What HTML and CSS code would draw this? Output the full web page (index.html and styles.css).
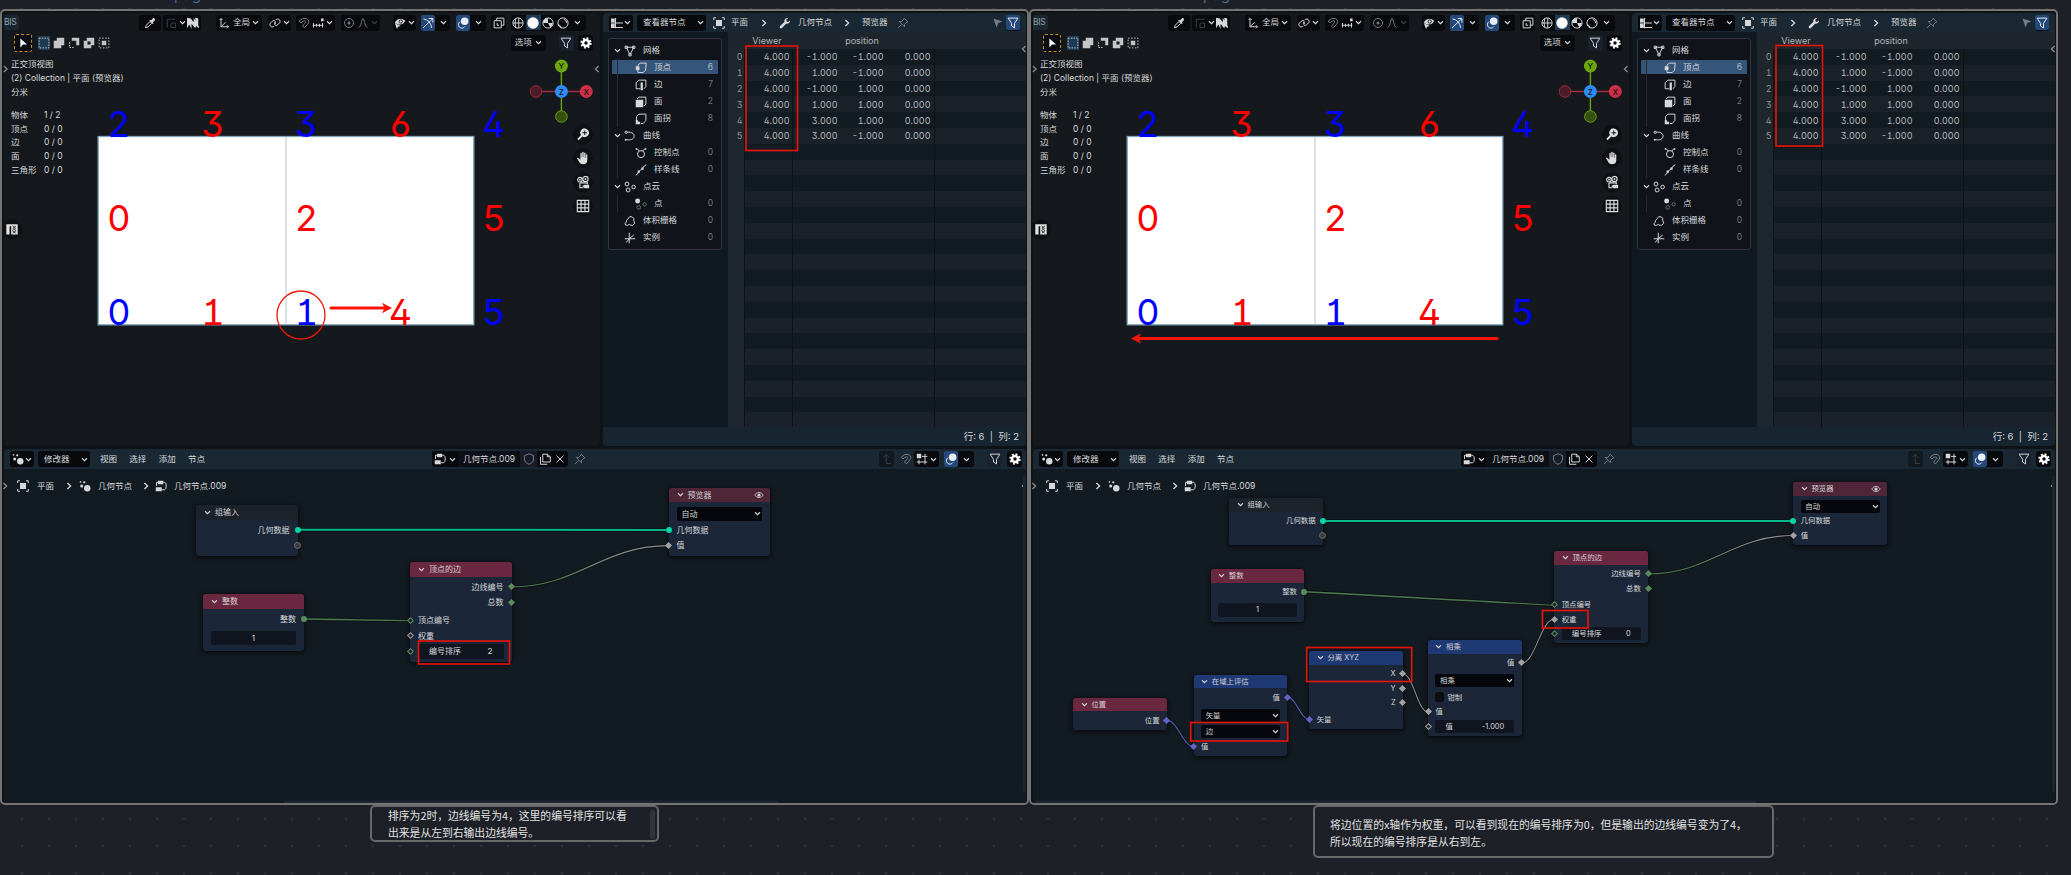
FILE: index.html
```html
<!DOCTYPE html>
<html lang="zh-CN">
<head>
<meta charset="utf-8">
<title>几何节点</title>
<link rel="stylesheet" href="styles.css">
</head>
<body>
<svg class="sprite" aria-hidden="true">
  <symbol id="chev" viewBox="0 0 8 8"><path d="M1.2 2.6 4 5.4 6.8 2.6" class="s"/></symbol>
  <symbol id="right" viewBox="0 0 8 8"><path d="M2.4 1 5.6 4 2.4 7" class="s"/></symbol>
  <symbol id="left" viewBox="0 0 8 8"><path d="M5.6 1 2.4 4l3.2 3" class="s"/></symbol>
  <symbol id="pick" viewBox="0 0 16 16"><path d="M2 14.2 3 11l5-5 2.300 2.300-5 5z" class="s"/><path d="m7 4.600 4.700 4.700 1-1-1-1.200 2.600-2.600c1.400-1.600-1-4-2.600-2.600L9.100 4.500 8 3.600z" class="f"/></symbol>
  <symbol id="corner" viewBox="0 0 16 16"><path d="M3 14V3h11M8 14h6V8H10q-2 0-2 2z" class="s"/></symbol>
  <symbol id="zebra" viewBox="0 0 16 16"><path d="M0 1l5 1 4 5V1l7 12v2l-4-3-1 3-5-6v7L3 10l-3 5z" class="f"/><path d="M11 1v6l2 3 2 2V2z" class="f"/></symbol>
  <symbol id="axes" viewBox="0 0 16 16"><path d="M4 2v11h10M4 13l6-6M2 4l2-2 2 2M12 11l2 2-2 2" class="s"/></symbol>
  <symbol id="link" viewBox="0 0 16 16"><path d="M9 4l1-1a3.300 3.300 0 0 1 4.300 4.700l-2.500 2.500a3.300 3.300 0 0 1-4.600 0M7 12l-1 1a3.300 3.300 0 0 1-4.300-4.700l2.500-2.500a3.300 3.300 0 0 1 4.600 0" class="s"/><circle cx="8" cy="8" r="1.300" class="f"/></symbol>
  <symbol id="magnet" viewBox="0 0 16 16"><path d="M1.500 5.500q5-5.500 10-3.500 5 3.500 1 8L8.500 14.500 6 12l4-4.500q1-2.500-1.500-2.500Q6 5.500 4 8z" class="s"/></symbol>
  <symbol id="incr" viewBox="0 0 16 16"><path d="M1 11h14M2 8v6M6 9v4M10 9v4M14 8v6" class="s"/><path d="M12 2h3.500v3.500H12z" class="f"/></symbol>
  <symbol id="prop" viewBox="0 0 16 16"><circle cx="8" cy="8" r="6" class="s"/><circle cx="8" cy="8" r="2" class="f"/></symbol>
  <symbol id="fall" viewBox="0 0 16 16"><path d="M2 14C6 13 6 2 8 2s2 11 6 12" class="s"/></symbol>
  <symbol id="eyecur" viewBox="0 0 16 16"><path d="M1 7q6-8 14-2-3 6-9 5Q2 9 1 7z" class="f"/><circle cx="9" cy="6" r="2.200" fill="none" stroke="#111" stroke-width="1.200"/><path d="M1 8l8 4-3.500 1L4 16z" class="f"/></symbol>
  <symbol id="gizmo" viewBox="0 0 16 16"><path d="M1.500 14.500 14 2.500M9 2h5.500v5.500" class="s"/><path d="M2 2.500q9 1.500 11 12" class="s"/></symbol>
  <symbol id="overlay" viewBox="0 0 16 16"><circle cx="10.200" cy="5.800" r="5" class="f"/><path d="M4 6.200a4.700 4.700 0 1 0 6.500 6.500" class="s" stroke-width="1.700"/></symbol>
  <symbol id="xray" viewBox="0 0 16 16"><path d="M1.500 5h9.500v9.500H1.500zM5 5V1.500h9.500V11H11" class="s"/><path d="M5.500 8v3H8" class="s"/></symbol>
  <symbol id="wire" viewBox="0 0 16 16"><circle cx="8" cy="8" r="6.800" class="s"/><path d="M1.500 8h13M9 1.500v13M5 2.500q-2 5.500 0 11" class="s"/></symbol>
  <symbol id="solid" viewBox="0 0 16 16"><circle cx="8" cy="8" r="7.600" fill="#fff"/></symbol>
  <symbol id="mat" viewBox="0 0 16 16"><circle cx="8" cy="8" r="6.800" class="s"/><path d="M8 1.500V8H1.500A6.500 6.500 0 0 1 8 1.500zM8 8h6.500Q14 12 11 13.500z" class="f"/></symbol>
  <symbol id="rend" viewBox="0 0 16 16"><circle cx="8" cy="8" r="6.800" class="s"/><path d="M2 10q2.500 1 4 4.500M9 3q4 1 4 5" class="s"/></symbol>
  <symbol id="arrow" viewBox="0 0 16 16"><path d="M4.500 2v12l3.500-4h5.500z" class="f"/></symbol>
  <symbol id="dash" viewBox="0 0 16 16"><path d="M1.500 1.500h13v13h-13z" class="s" stroke-dasharray="2 1.600"/></symbol>
  <symbol id="s-add" viewBox="0 0 16 16"><path d="M5 1h10v10h-4v4H1V5h4z" class="f"/></symbol>
  <symbol id="s-sub" viewBox="0 0 16 16"><path d="M5 1h10v10h-4V5H5z" class="f"/><path d="M2 7v7h7" class="s" stroke-dasharray="2 1.500"/></symbol>
  <symbol id="s-inv" viewBox="0 0 16 16"><path fill-rule="evenodd" d="M5 1h10v10h-4v4H1V5h4zM6 6v4h4V6z" class="f"/></symbol>
  <symbol id="s-int" viewBox="0 0 16 16"><path d="M5 5h6v6H5z" class="f"/><path d="M1.500 1.500h13v13h-13z" class="s" stroke-dasharray="2 2"/></symbol>
  <symbol id="filter" viewBox="0 0 16 16"><path d="M1.500 1.500h13L10 8.500v6L6 12V8.500z" class="s"/></symbol>
  <symbol id="gear" viewBox="0 0 16 16"><circle cx="8" cy="8" r="4" fill="none" stroke="currentColor" stroke-width="3.400"/><circle cx="8" cy="8" r="6.300" fill="none" stroke="currentColor" stroke-width="2.600" stroke-dasharray="2.480 2.470"/></symbol>
  <symbol id="zoomi" viewBox="0 0 16 16"><path fill-rule="evenodd" d="M10 1a5 5 0 1 1-2.700 9.300L3 14.600 1.400 13l4.300-4.300A5 5 0 0 1 10 1zM9.500 3.500v2h-2v1h2v2h1v-2h2v-1h-2v-2z" class="f"/></symbol>
  <symbol id="hand" viewBox="0 0 16 16"><path d="M1 8c1-1 2 0 4 2V3c0-1.300 1.500-1.300 1.600 0v4h.5V1.800c0-1.300 1.600-1.300 1.700 0V7h.5V2.500c0-1.200 1.500-1.200 1.600 0V8h.5V4.500c0-1.200 1.500-1.200 1.500 0V10c0 4-2 5-5 5-2.500 0-3.400-1-5-4z" class="f"/></symbol>
  <symbol id="cam" viewBox="0 0 16 16"><circle cx="4.500" cy="4.800" r="2.600" class="s"/><circle cx="10.800" cy="4" r="3" class="s"/><circle cx="4.500" cy="4.800" r="1" class="f"/><circle cx="10.800" cy="4" r="1.100" class="f"/><path d="M4.500 8.500V14h4M5 8.500h8V10" class="s"/><path d="M7 12l3-1.500h5v4h-5z" class="f"/></symbol>
  <symbol id="grid" viewBox="0 0 16 16"><path d="M1.500 1.500h13v13h-13zM5.800 1.500v13M10.200 1.500v13M1.500 5.800h13M1.500 10.200h13" class="s"/></symbol>
  <symbol id="strip" viewBox="0 0 16 16"><path d="M1 1.500h4V14H1zM5 1.500h10V14H7V4H5z" class="f"/><path d="M8.500 3.500l4 3-4 3 4 3M13 3.500l-4 3 4 3-4 3" fill="none" stroke="#222" stroke-width="1"/></symbol>
  <symbol id="sheet" viewBox="0 0 16 16"><path d="M0 2h5v5H0zM0 9h5v4.500H0z" class="f"/><path d="M6 1.500V15M0 8h16M0 14h16M6 2h1" class="s" stroke-width="1.800"/></symbol>
  <symbol id="obj" viewBox="0 0 16 16"><path d="M4 4h8v8H4z" class="f"/><path d="M1 4V1h3M12 1h3v3M15 12v3h-3M4 15H1v-3" class="s"/></symbol>
  <symbol id="wrench" viewBox="0 0 16 16"><path d="M14.800 4.500 12 6.500 10 5.800 9.700 3.500l2.500-2A4.400 4.400 0 0 0 7 6.500L1.400 12a1.800 1.800 0 0 0 2.600 2.600L9.500 9a4.400 4.400 0 0 0 5.300-4.500z" class="f"/></symbol>
  <symbol id="pin" viewBox="0 0 16 16"><path d="M9.500 1.500l5 5-1.500.5-3 3 0 3L3 6h3l3-3zM6 10l-4.500 4.500" class="s"/></symbol>
  <symbol id="cursor" viewBox="0 0 16 16"><path d="M2 2l12 4-5.500 2L6 14z" class="f"/></symbol>
  <symbol id="mesh" viewBox="0 0 16 16"><path d="M3 3h10L8 13z" class="s"/><path d="M1.500 1.500h3v3h-3zM11.500 1.500h3v3h-3zM6.500 11.500h3v3h-3z" class="s"/></symbol>
  <symbol id="vert" viewBox="0 0 16 16"><path d="M4 4l3-2.500h8L14 11l-3 3H4V10M4 6V4" class="s"/><path d="M1 5.500h5v5H1z" class="f"/></symbol>
  <symbol id="edge" viewBox="0 0 16 16"><path d="M7 13H1.500V5L5 1.500h9.500V10L12 13" class="s"/><path d="M7.500 4.500h3V15h-3z" class="f"/></symbol>
  <symbol id="face" viewBox="0 0 16 16"><path d="M1 5h10v10H1z" class="f"/><path d="M3 4l2-2.500h9.500V11L12 13" class="s"/></symbol>
  <symbol id="cornr" viewBox="0 0 16 16"><path d="M2 9V5l3-3.500h9.500V10L11 14H8" class="s"/><path d="M1 9h2.500q0 3 3.500 3v3H1z" class="f"/></symbol>
  <symbol id="curve" viewBox="0 0 16 16"><path d="M4 3C11 2 15 6 13 10s-7 3-10 3" class="s"/><circle cx="2.800" cy="3" r="1.500" class="s"/><circle cx="2.200" cy="13" r="1.300" class="f"/></symbol>
  <symbol id="ctrl" viewBox="0 0 16 16"><circle cx="8" cy="9.500" r="4.700" class="s"/><path d="M3 3l3 2M13 3l-3 2" class="s"/><circle cx="2" cy="2.500" r="1.200" class="f"/><circle cx="14" cy="2.500" r="1.200" class="f"/></symbol>
  <symbol id="spline" viewBox="0 0 16 16"><path d="M1 15q3-1 4-5l5-4q2-4 5-5" class="s"/><path d="M3.500 8.500h3v3h-3zM8.500 4.500h3v3h-3z" class="f"/></symbol>
  <symbol id="cloud" viewBox="0 0 16 16"><circle cx="4" cy="4" r="2.600" class="s"/><circle cx="5.500" cy="12" r="2.600" class="s"/><circle cx="12.800" cy="8" r="2.400" class="s"/></symbol>
  <symbol id="pt" viewBox="0 0 16 16"><circle cx="3.500" cy="4" r="3.300" class="f"/><g opacity=".45"><circle cx="5" cy="12.500" r="2.400" class="s"/><circle cx="12.800" cy="8.500" r="2.200" class="s"/></g></symbol>
  <symbol id="vol" viewBox="0 0 16 16"><path d="M2 13.500q-2-2 1-4 0-3 2-4 2-5 6-3 3 1.500 2 5 3 4-1 6-3 1-5-1-2 2-5 1z" class="s"/></symbol>
  <symbol id="inst" viewBox="0 0 16 16"><path d="M7 1v14M1 9h14M3 14l4-5 6-5" class="s"/></symbol>
  <symbol id="geo" viewBox="0 0 16 16"><circle cx="11" cy="11" r="4.300" class="f"/><circle cx="3.600" cy="8" r="2" class="f"/><circle cx="7" cy="3" r="1.500" class="f"/><circle cx="2" cy="2.500" r="1.100" class="f"/></symbol>
  <symbol id="tree" viewBox="0 0 16 16"><path d="M4 1h7v4.500H4zM1 9.500h8V15H1z" class="f"/><path d="M11 3h2q2 1 2 5t-2 5H9M4 3H2v5" class="s"/></symbol>
  <symbol id="shield" viewBox="0 0 16 16"><path d="M8 1l6 2.500V8c0 4-3 6-6 7-3-1-6-3-6-7V3.500z" class="s"/></symbol>
  <symbol id="copy" viewBox="0 0 16 16"><path d="M5 1.500h6l4 3.500v7H5zM11 1.500V5h4M2 5v10h9" class="s"/></symbol>
  <symbol id="close" viewBox="0 0 16 16"><path d="M3.500 3.500l9 9M12.500 3.500l-9 9" class="s"/></symbol>
  <symbol id="up" viewBox="0 0 16 16"><path d="M3 6l4-4 4 4M7 2v12h6" class="s"/></symbol>
  <symbol id="snapg" viewBox="0 0 16 16"><path d="M1 1h6v6H1z" class="f"/><path d="M12 1v14M4 9v6M8 4.500h7M1 12h14" class="s"/></symbol>
  <symbol id="eye" viewBox="0 0 16 16"><path d="M1 8q7-8.500 14 0-7 8.500-14 0z" class="s" stroke-width="1.800"/><circle cx="8" cy="8" r="2.600" class="f"/></symbol>
</svg>

<main class="board" id="board">
  <p class="cut-label cut-a">page</p>
  <p class="cut-label cut-b">page</p>
  <aside class="note note-a">排序为2时，边线编号为4，这里的编号排序可以看<br>出来是从左到右输出边线编号。<span class="note-bar"></span></aside>
  <aside class="note note-b">将边位置的x轴作为权重，可以看到现在的编号排序为0，但是输出的边线编号变为了4，<br>所以现在的编号排序是从右到左。</aside>
</main>

<template id="screen">
  <section class="capture">
    <div class="editors">
      <div class="viewport">
        <div class="bar bar-3d">
          <span class="tab">BIS</span>
          <span class="grp g-pick"><i data-i="pick"></i></span>
          <span class="grp g-corner"><i data-i="corner" class="dim"></i><i data-i="chev"></i><i data-i="zebra"></i></span>
          <span class="grp g-orient"><i data-i="axes"></i><b>全局</b><i data-i="chev"></i></span>
          <span class="grp g-pivot"><i data-i="link"></i><i data-i="chev"></i></span>
          <span class="grp g-snap"><i data-i="magnet" class="mid"></i><i data-i="incr"></i><i data-i="chev"></i></span>
          <span class="grp g-prop"><i data-i="prop" class="mid"></i><i data-i="fall" class="mid"></i><i data-i="chev" class="dim"></i></span>
          <span class="grp g-vis"><i data-i="eyecur"></i><i data-i="chev"></i></span>
          <span class="grp g-giz"><i data-i="gizmo" class="on"></i><i data-i="chev"></i></span>
          <span class="grp g-over"><i data-i="overlay" class="on"></i><i data-i="chev"></i></span>
          <span class="grp g-xray"><i data-i="xray"></i></span>
          <span class="grp g-shade"><i data-i="wire"></i><i data-i="solid" class="sel"></i><i data-i="mat"></i><i data-i="rend"></i><i data-i="chev"></i></span>
        </div>
        <div class="bar bar-tool">
          <span class="tool"><i data-i="arrow"></i></span>
          <span class="modes"><i data-i="dash" class="sel"></i><i data-i="s-add"></i><i data-i="s-sub"></i><i data-i="s-inv"></i><i data-i="s-int"></i></span>
          <span class="grp g-opt"><b>选项</b><i data-i="chev"></i></span>
          <span class="grp g-filt"><i data-i="filter"></i></span>
          <span class="grp g-gear"><i data-i="gear"></i></span>
        </div>
        <div class="info">
          <p>正交顶视图</p><p>(2) Collection | 平面 (预览器)</p><p>分米</p>
        </div>
        <dl class="stats">
          <dt>物体</dt><dd>1 / 2</dd><dt>顶点</dt><dd>0 / 0</dd><dt>边</dt><dd>0 / 0</dd><dt>面</dt><dd>0 / 0</dd><dt>三角形</dt><dd>0 / 0</dd>
        </dl>
      </div>
      <div class="sheet">
        <div class="bar bar-sheet">
          <span class="grp s-type"><i data-i="sheet"></i><i data-i="chev"></i></span>
          <span class="grp s-drop"><b>查看器节点</b><i data-i="chev"></i></span>
          <span class="crumb"><i data-i="obj"></i><b>平面</b><i data-i="right"></i><i data-i="wrench"></i><b>几何节点</b><i data-i="right"></i><b>预览器</b><i data-i="pin" class="mid"></i></span>
          <span class="grp s-cur"><i data-i="cursor" class="mid"></i></span><span class="grp s-filt"><i data-i="filter" class="on"></i></span>
        </div>
        <div class="sheet-main">
          <div class="side"><ul class="domains"></ul></div>
          <div class="table">
            <div class="thead"><span></span><span>Viewer</span><span class="pos">position</span></div>
            <div class="tbody"></div>
          </div>
        </div>
        <div class="status">行: 6 &nbsp;|&nbsp; 列: 2</div>
      </div>
    </div>
    <div class="nodes">
      <div class="bar bar-node">
        <span class="grp n-type"><i data-i="geo"></i><i data-i="chev"></i></span>
        <span class="grp n-mod"><b>修改器</b><i data-i="chev"></i></span>
        <nav class="menu"><b>视图</b><b>选择</b><b>添加</b><b>节点</b></nav>
        <span class="grp n-tree"><i data-i="tree"></i><i data-i="chev"></i></span>
        <span class="grp n-name"><b>几何节点.009</b></span>
        <span class="grp n-shield"><i data-i="shield" class="mid"></i></span>
        <span class="grp n-copy"><i data-i="copy"></i></span>
        <span class="grp n-close"><i data-i="close"></i></span>
        <i data-i="pin" class="mid n-pin"></i>
        <span class="grp n-up"><i data-i="up" class="dim"></i></span>
        <i data-i="magnet" class="mid n-mag"></i>
        <span class="grp n-snap"><i data-i="snapg"></i><i data-i="chev"></i></span>
        <span class="grp n-over"><i data-i="overlay" class="on"></i><i data-i="chev"></i></span>
        <span class="grp n-filt"><i data-i="filter"></i></span>
        <span class="grp n-gear"><i data-i="gear"></i></span>
      </div>
      <div class="path"><i data-i="obj"></i><b>平面</b><i data-i="right"></i><i data-i="geo"></i><b>几何节点</b><i data-i="right"></i><i data-i="tree"></i><b>几何节点.009</b></div>
    </div>
    <div class="layer">
      <svg class="scene" viewBox="0 0 1029 875"></svg>
      <div class="graph"></div>
      <svg class="marks" viewBox="0 0 1029 875"></svg>
    </div>
  </section>
</template>
<script src="app.js"></script>
</body>
</html>
```

FILE: styles.css
```css
* { box-sizing: border-box; }
body {
  margin: 0;
  background: #1e2028;
  color: #d6d8da;
  font-family: "Inter", "Noto Sans CJK SC", sans-serif;
  font-size: 8.5px;
  line-height: 1;
  overflow: hidden;
}
p, ul, dl, dd { margin: 0; padding: 0; }
b { font-weight: 400; white-space: nowrap; }
.sprite { position: absolute; width: 0; height: 0; }
.s { fill: none; stroke: currentColor; stroke-width: 1.3; }
.f { fill: currentColor; }

.board {
  position: relative;
  width: 2071px;
  height: 875px;
  overflow: hidden;
  background: radial-gradient(circle at 13.5px 13.500px, #363a3e 0.9px, transparent 1.3px) 8.500px -4.500px / 27px 27px, #1e2028;
}
.cut-label { position: absolute; top: -14px; font-size: 15px; line-height: 18px; color: #4a6892; }
.cut-a { left: 174px; }
.cut-b { left: 1203px; color: #566b80; }
.note {
  position: absolute;
  background: #1d2027;
  border: 2px solid #696868;
  border-radius: 5px;
  font-family: "Noto Sans CJK SC", sans-serif;
  font-size: 10.800px;
  line-height: 16.500px;
  color: #e2e2e2;
  white-space: nowrap;
}
.note-a { left: 370px; top: 805px; width: 289px; height: 37px; padding: 0 16px; }
.note-b { left: 1313px; top: 805px; width: 461px; height: 53px; padding: 9px 15px; }
.note-bar { position: absolute; right: 2px; top: 3px; width: 5px; height: 29px; border-radius: 2px; background: #303338; }

.capture {
  position: absolute;
  left: 0;
  top: 9px;
  width: 1029px;
  height: 796px;
  border: 2px solid #757473;
  border-radius: 5px;
  background: #0d1317;
  padding: 2px 1px 0 2px;
  display: flex;
  flex-direction: column;
  gap: 3px;
}
.capture.second { left: 1029px; }
.editors { display: flex; gap: 3px; height: 433px; }
.viewport { width: 596px; background: #15181c; border-radius: 4px; overflow: hidden; }
.sheet { flex: 1; display: flex; flex-direction: column; background: #131b22; border-radius: 4px; overflow: hidden; }
.nodes { flex: 1; background: #131b22; border-radius: 4px 4px 0 0; }

.bar { display: flex; align-items: center; }
i { display: inline-flex; align-items: center; justify-content: center; flex: none; width: 12px; height: 15px; }
i svg { width: 12px; height: 12px; display: block; }
i[data-i="chev"] { width: 7px; }
i[data-i="chev"] svg { width: 7px; height: 7px; }
i[data-i="right"] svg, i[data-i="left"] svg { width: 8px; height: 8px; }
.mid { color: #777c83; }
.dim { color: #3c4147; }
.on { background: #25487a; color: #e8eef5; border-radius: 2px; }
.grp { display: flex; align-items: center; justify-content: space-evenly; height: 16px; background: #080a0e; border-radius: 3px; flex: none; }

.bar-3d { height: 19px; }
.tab { width: 15px; height: 15px; background: #1a2832; border-radius: 0 3px 3px 0; color: #8fa0ab; line-height: 15px; letter-spacing: -0.3px; }
.g-pick { width: 22px; margin-left: 120px; }
.g-corner { width: 38px; margin-left: 2px; }
.g-orient { width: 46px; margin-left: 15px; }
.g-pivot { width: 23px; margin-left: 6px; }
.g-snap { width: 39px; margin-left: 5px; }
.g-prop { width: 39px; margin-left: 6px; }
.g-vis { width: 23px; margin-left: 13px; }
.g-giz { width: 29px; margin-left: 5px; }
.g-over { width: 30px; margin-left: 6px; }
.g-xray { width: 15px; margin-left: 5px; }
.g-shade { width: 75px; margin-left: 5px; justify-content: flex-start; overflow: hidden; }
.g-shade i, .g-shade i[data-i="chev"] { width: 14.8px; }
.g-giz, .g-over, .n-over { justify-content: flex-start; gap: 5px; }
.g-giz .on, .g-over .on, .n-over .on { width: 14px; height: 16px; }
.sel { background: #1d3b55; }

.bar-tool { height: 21px; padding-left: 10px; }
.tool { width: 18px; height: 18px; border: 1.500px dashed #c08a2b; border-radius: 2px; display: flex; align-items: center; justify-content: center; background: #0b0d12; color: #fff; }
.modes { display: flex; gap: 3px; margin-left: 6px; color: #c3c5c6; }
.modes i { height: 14px; }
.g-opt { width: 35px; margin-left: 401px; }
.g-filt { width: 15px; margin-left: 12.5px; background: #1a212e; }
.g-gear { width: 15px; margin-left: 4.5px; color: #fff; }

.info { padding: 4px 0 0 7px; line-height: 14px; white-space: nowrap; }
.stats { display: grid; grid-template-columns: 33px 40px; padding: 10px 0 0 7px; line-height: 13.700px; }

.bar-sheet { height: 19px; background: #192833; }
.s-type { width: 24px; margin-left: 6px; }
.s-drop { width: 69px; margin-left: 4px; justify-content: space-between; padding: 0 2px 0 6px; }
.crumb { display: flex; align-items: center; margin-left: 7px; }
.crumb b:nth-of-type(1) { margin: 0 10px 0 6px; }
.crumb i[data-i="wrench"] { margin: 0 7px 0 9px; }
.crumb b:nth-of-type(2) { margin-right: 9px; }
.crumb b:nth-of-type(3) { margin: 0 9px 0 9px; }
.s-cur { margin-left: auto; background: none; }
.s-filt { width: 14px; margin: 0 6px 0 2px; }
.s-filt .on { width: 14px; }
.sheet-main { display: flex; height: 395px; }
.side { width: 125px; background: #101920; padding: 6px 6px 0 5px; }
.domains { list-style: none; height: 212px; border: 1px solid #32363b; border-radius: 3px; background: #10141a; padding: 3px 3px 0; }
.domains li { display: flex; align-items: center; height: 17px; padding: 0 5px 0 1px; }
.domains i[data-i="chev"] { width: 8px; margin-right: 3px; }
.domains .none { width: 11px; }
.domains b { margin-left: 7px; }
.domains .n { margin-left: auto; color: #74797e; }
.domains .child { padding-left: 23px; position: relative; }
.domains .child::before { content: ""; position: absolute; left: 5px; top: 0; width: 1px; height: 17px; background: #272b31; }
.domains .child.active { background: linear-gradient(#35567a, #35567a) 0 1px / 100% 14px no-repeat; border-radius: 3px; }
.domains .active .n { color: #a9b6c4; }
.table { flex: 1; display: flex; flex-direction: column; font-size: 9px; color: #b4b7ba; font-feature-settings: "tnum", "cv01", "cv02", "cv03", "cv09"; }
.thead { display: flex; height: 17px; align-items: center; background: #1e252c; }
.thead span { width: 48px; text-align: center; }
.thead span:first-child { width: 16.500px; }
.thead span.pos { width: 142px; }
.thead span:nth-child(2) { padding-right: 3px; }
.thead span.pos { padding-right: 3px; }
.tbody { flex: 1; overflow: hidden; }
.tr { display: grid; grid-template-columns: 14.500px 47px 48px 46px 47px; height: 15.800px; align-items: center; text-align: right; background: linear-gradient(90deg, #1e262e 16.500px, #0c1217 16.500px 17.200px, transparent 17.200px 64.500px, #0c1217 64.500px 65.300px, transparent 65.300px 206.500px, #0c1217 206.500px 207.300px, transparent 207.300px); }
.tr:nth-child(even) { background-color: #1a2129; }
.tr span:first-child { color: #8f9398; }
.status { flex: 1; background: #172530; text-align: right; padding: 5px 7px 0 0; font-size: 9.5px; }

.bar-node { height: 20px; background: #192833; border-radius: 4px 4px 0 0; }
.n-type { width: 24px; margin-left: 6px; }
.n-mod { width: 52px; margin-left: 4px; justify-content: space-between; padding: 0 2px 0 6px; }
.menu { display: flex; gap: 12.3px; margin-left: 10px; width: 119px; }
.n-tree { width: 26px; margin-left: 213px; border-radius: 3px 0 0 3px; }
.n-name { width: 62px; border-radius: 0; background: #0c0f15; }
.n-shield { width: 17px; background: #171c28; border-radius: 0; }
.n-copy { width: 15px; border-radius: 0; }
.n-close { width: 16px; border-radius: 0 3px 3px 0; }
.n-pin { margin-left: 6px; }
.n-up { width: 15px; margin-left: 293px; background: #111820; }
.n-mag { margin-left: 6px; }
.n-snap { width: 25px; margin-left: 2px; }
.n-over { width: 30px; margin-left: 5px; }
.n-filt { width: 15px; margin-left: 13px; background: #1a212e; }
.n-gear { width: 15px; margin-left: 5px; color: #fff; }
.path { display: flex; align-items: center; height: 34px; padding-left: 13px; }
.path b:nth-of-type(1) { margin: 0 9px 0 8px; }
.path i[data-i="geo"] { margin: 0 7px 0 4px; }
.path b:nth-of-type(2) { margin-right: 8px; }
.path i[data-i="tree"] { margin: 0 7px 0 3px; }

/* canvas layer shared by the mesh, node graph and annotations */
.layer { position: absolute; left: -2px; top: -11px; width: 1029px; height: 875px; }
.scene, .marks { position: absolute; inset: 0; width: 1029px; height: 875px; }
.digit { font-size: 36px; text-anchor: middle; font-feature-settings: "tnum", "cv01", "cv02", "cv03", "cv09"; }
.gz { font-size: 8px; font-weight: 500; text-anchor: middle; fill: #111; }
.mark { fill: none; stroke: #e01408; stroke-width: 1.700; }
.node {
  position: absolute;
  background: #1b2738;
  border-radius: 3px;
  box-shadow: 0 1px 4px 1px #0009;
  font-size: calc(8px * var(--u));
  padding-bottom: calc(2.500px * var(--u));
}
.node.wide-end { padding-bottom: calc(5px * var(--u)); }
.title { display: flex; align-items: center; height: calc(14.700px * var(--u)); padding: 0 calc(5px * var(--u)) 0 calc(8px * var(--u)); margin-bottom: calc(2.200px * var(--u)); border-radius: 3px 3px 0 0; color: #d2d0d4; }
.title i[data-i="chev"] { margin-right: calc(4px * var(--u)); }
.title i[data-i="eye"] { margin-left: auto; }
.title i[data-i="eye"] svg { width: 10px; height: 10px; }
.t-plain { background: #1b222a; }
.t-red { background: #6a2840; }
.t-view { background: #4f2538; }
.t-blue { background: #1f3974; }
.row { position: relative; display: flex; align-items: center; height: calc(15.700px * var(--u)); padding: 0 calc(8px * var(--u)); white-space: nowrap; }
.row.out { justify-content: flex-end; }
.row.gap { margin-top: calc(2px * var(--u)); }
.row.gap2 { margin-top: calc(3.800px * var(--u)); }
.box { flex: 1; display: flex; align-items: center; justify-content: space-between; height: calc(14.500px * var(--u)); border-radius: 2px; background: #11151f; padding: 0 calc(11px * var(--u)); }
.box.drop { background: #05070c; padding: 0 1px 0 calc(5px * var(--u)); height: calc(14px * var(--u)); }
.box.num { justify-content: center; }
.check { width: 9px; height: 10px; background: #0c0d10; border-radius: 2px; margin-right: 3px; }
.sock { position: absolute; top: 50%; width: 6px; height: 6px; margin: -3px; background: var(--c); }
.out .sock { right: 0; }
.in .sock { left: 0; }
.sock.dot { border-radius: 50%; }
.sock.dia { width: 5px; height: 5px; margin: -2.500px; transform: rotate(45deg); }
.sock.ring { background: #20252c; border: 1.500px solid var(--c); }
.sock.dot.ring { width: 7px; height: 7px; margin: -3.5px; background: #3c3c3c; }
```

FILE: app.js
```js
const icon = (id, cls = '') => `<i data-i="${id}" class="${cls}"><svg><use href="#${id}"/></svg></i>`;

const GEO = '#00d6a3', INT = '#598c5c', VAL = '#a1a1a1', VEC = '#6363c7';

const domains = [
  ['mesh', '网格', '', 0], ['vert', '顶点', 6, 1, 'active'], ['edge', '边', 7, 1], ['face', '面', 2, 1], ['cornr', '面拐', 8, 1],
  ['curve', '曲线', '', 0], ['ctrl', '控制点', 0, 1], ['spline', '样条线', 0, 1],
  ['cloud', '点云', '', 0], ['pt', '点', 0, 1], ['vol', '体积栅格', 0, 2], ['inst', '实例', 0, 2]
];
const rows = [
  ['4.000', '-1.000', '-1.000', '0.000'], ['4.000', '1.000', '-1.000', '0.000'], ['4.000', '-1.000', '1.000', '0.000'],
  ['4.000', '1.000', '1.000', '0.000'], ['4.000', '3.000', '1.000', '0.000'], ['4.000', '3.000', '-1.000', '0.000']
];
const out = (t, c, s = 'dia', g = '') => ({ k: 'out', t, c, s, g });
const inp = (t, c, s = 'dia', g = '') => ({ k: 'in', t, c, s, g });
const drop = (t, g = 'gap2') => ({ k: 'drop', t, g });
const num = t => ({ k: 'num', t, g: 'gap2' });
const field = (t, v, c) => ({ k: 'field', t, v, c });

const groupIn = [out('几何数据', GEO, 'dot'), out('', '#6b6b6b', 'dot ring')];
const integer = [out('整数', INT, 'dot'), num('1')];
const viewer = [drop('自动'), inp('几何数据', GEO, 'dot'), inp('值', VAL)];
const edges = (v, w) => [out('边线编号', INT), out('总数', INT), inp('顶点编号', INT, 'dia ring', 'gap'), inp('权重', VAL, w), field('编号排序', v, INT)];

const captures = [
  {
    nodes: [
      { x: 196, y: 505, w: 101.5, u: 1, t: '组输入', c: 't-plain', r: groupIn },
      { x: 203, y: 594, w: 101, u: 1, t: '整数', c: 't-red', r: integer, e: 1 },
      { x: 410, y: 562, w: 101.5, u: 1, t: '顶点的边', c: 't-red', r: edges(2, 'dia ring') },
      { x: 668.5, y: 487.5, w: 101, u: 1, t: '预览器', c: 't-view', r: viewer, eye: 1 }
    ],
    links: [[297.5, 529.7, 668.5, 530, GEO, 2], [304, 619, 410, 620.5, INT, 1.6], [511.5, 587, 668.5, 545.7, 'url(#mix)', 1.2]],
    boxes: [[746, 46, 51.5, 104.5], [418.5, 641, 91, 23]],
    arrow: [331, 388, 308, 1], circle: [301, 315, 24]
  },
  {
    nodes: [
      { x: 200.3, y: 498, w: 93.7, u: .925, t: '组输入', c: 't-plain', r: groupIn },
      { x: 181.7, y: 569, w: 93.7, u: .925, t: '整数', c: 't-red', r: integer, e: 1 },
      { x: 44.3, y: 697.5, w: 93.7, u: .925, t: '位置', c: 't-red', r: [out('位置', VEC)] },
      { x: 164.7, y: 674.5, w: 93.7, u: .925, t: '在域上评估', c: 't-blue', r: [out('值', VEC), drop('矢量'), drop('边', 'gap'), inp('值', VEC)] },
      { x: 280.3, y: 651, w: 93.7, u: .925, t: '分离 XYZ', c: 't-blue', r: [out('X', VAL), out('Y', VAL), out('Z', VAL), inp('矢量', VEC, 'dia', 'gap')] },
      { x: 399, y: 640, w: 93.7, u: .925, t: '相乘', c: 't-blue', r: [out('值', VAL), drop('相乘'), { k: 'check', t: '钳制', g: 'gap' }, inp('值', VAL), field('值', '-1.000', VAL)] },
      { x: 525.3, y: 551, w: 93.9, u: .925, t: '顶点的边', c: 't-red', r: edges(0, 'dia') },
      { x: 764.3, y: 482, w: 93.7, u: .925, t: '预览器', c: 't-view', r: viewer, eye: 1 }
    ],
    links: [[294, 521, 764.3, 521, GEO, 2], [275.4, 591.7, 525.3, 605, INT, 1.6], [619.2, 574, 764.3, 535.5, 'url(#mix)', 1.2],
      [138, 720.5, 164.7, 746.5, VEC, 1.3], [258.4, 697.5, 280.3, 719.3, VEC, 1.3], [374, 674, 399, 712, VAL, 1.1], [492.7, 663, 525.3, 619.3, VAL, 1.1]],
    boxes: [[747, 45.5, 46.5, 100.5], [161.7, 722.5, 97, 18.5], [277.7, 647.5, 105, 34], [513.5, 610.5, 45.5, 17.5]],
    arrow: [468, 106, 338.5, -1]
  }
];

const socket = r => `<span class="sock ${r.s || 'dia ring'}" style="--c:${r.c}"></span>`;
function rowHtml(r) {
  const g = r.g || '';
  if (r.k === 'out') return `<div class="row out ${g}">${r.t}${socket(r)}</div>`;
  if (r.k === 'in') return `<div class="row in ${g}">${socket(r)}${r.t}</div>`;
  if (r.k === 'drop') return `<div class="row ${g}"><span class="box drop">${r.t}${icon('chev')}</span></div>`;
  if (r.k === 'num') return `<div class="row ${g}"><span class="box num">${r.t}</span></div>`;
  if (r.k === 'check') return `<div class="row ${g}"><span class="check"></span>${r.t}</div>`;
  return `<div class="row in">${socket(r)}<span class="box"><span>${r.t}</span><span>${r.v}</span></span></div>`;
}
function nodeHtml(n) {
  return `<div class="node ${n.e ? 'wide-end' : ''}" style="left:${n.x}px;top:${n.y}px;width:${n.w}px;--u:${n.u}">
    <div class="title ${n.c}">${icon('chev')}${n.t}${n.eye ? icon('eye') : ''}</div>${n.r.map(rowHtml).join('')}</div>`;
}
function linkPath([x1, y1, x2, y2, c, w]) {
  const d = Math.abs(y2 - y1) < 14 ? 0 : (x2 - x1) * .42;
  return `<path d="M${x1} ${y1}C${x1 + d} ${y1} ${x2 - d} ${y2} ${x2} ${y2 + .01}" fill="none" stroke="#0b0f13" stroke-width="${w + 1.6}"/>
    <path d="M${x1} ${y1}C${x1 + d} ${y1} ${x2 - d} ${y2} ${x2} ${y2 + .01}" fill="none" stroke="${c}" stroke-width="${w}" opacity=".85"/>`;
}
function sceneSvg(cap, second) {
  const cols = [119, 213, 306.5, 400.5, 494];
  const line = (y, list) => list.map(([i, t, c]) => `<text class="digit" x="${cols[i]}" y="${y}" fill="${c}">${t}</text>`).join('');
  const B = '#0000ff', R = '#ff0000';
  const nav = (x, y, id) => `<circle cx="${x}" cy="${y}" r="10" fill="#0e1013"/><svg x="${x - 7}" y="${y - 7}" width="14" height="14" color="#dcdcdc"><use href="#${id}"/></svg>`;
  const tick = (x, y, id) => `<svg x="${x - 4}" y="${y - 4}" width="8" height="8" color="#878b8f"><use href="#${id}"/></svg>`;
  return `<defs><linearGradient id="mix"><stop offset=".3" stop-color="${INT}"/><stop offset=".7" stop-color="${VAL}"/></linearGradient></defs>
    <rect x="98.200" y="136.500" width="375.600" height="188.300" fill="#fff" stroke="#7fa9ba" stroke-width="1.300"/>
    <path d="M286 137v187.500" stroke="#bccdd6" stroke-width="1.200"/>
    ${line(136.5, [[0, 2, B], [1, 3, R], [2, 3, B], [3, 6, R], [4, 4, B]])}
    ${line(230.5, [[0, 0, R], [2, 2, R], [4, 5, R]])}
    ${line(324.5, [[0, 0, B], [1, 1, R], [2, 1, B], [3, 4, R], [4, 5, B]])}
    <path d="M536 91.500h50" stroke="#a02b41" stroke-width="1.500"/><path d="M561.400 66v50" stroke="#6a9c14" stroke-width="1.500"/>
    <circle cx="536" cy="91.500" r="5.800" fill="#4c1d29" stroke="#a02b41"/><circle cx="561.400" cy="116.500" r="5.800" fill="#35500f" stroke="#6a9c14"/>
    <circle cx="561.400" cy="66" r="6.500" fill="#6ca50d"/><circle cx="586.300" cy="91.500" r="6.500" fill="#cc2f48"/><circle cx="561.400" cy="91.500" r="6.500" fill="#2b8cfa"/>
    <text class="gz" x="561.400" y="69">Y</text><text class="gz" x="586.300" y="94.500">X</text><text class="gz" x="561.400" y="94.500">Z</text>
    ${nav(583, 134.5, 'zoomi')}${nav(583, 158, 'hand')}${nav(583, 182.5, 'cam')}${nav(583, 206, 'grid')}
    <circle cx="12" cy="229.500" r="10" fill="#0e1013"/><svg x="5.500" y="223" width="13" height="13" color="#e2e2e2"><use href="#strip"/></svg>
    ${tick(5.5, 69, 'right')}${tick(597, 69, 'left')}${tick(1024, 49, 'left')}${tick(5, 486, 'right')}${tick(1024, 486, 'left')}
    <rect x="1023" y="476" width="3" height="316" rx="1.500" fill="#1a2530"/>
    <rect x="${second ? 6 : 284}" y="800.500" width="${second ? 721 : 494}" height="2.500" rx="1.200" fill="#1c2733"/>
    ${cap.links.map(linkPath).join('')}`;
}
function marksSvg(cap) {
  const [x1, x2, y, d] = cap.arrow;
  return cap.boxes.map(([x, y, w, h]) => `<rect class="mark" x="${x}" y="${y}" width="${w}" height="${h}"/>`).join('')
    + (cap.circle ? `<circle cx="${cap.circle[0]}" cy="${cap.circle[1]}" r="${cap.circle[2]}" fill="none" stroke="#e8190c" stroke-width="1.300"/>` : '')
    + `<path d="M${x1} ${y}H${x2}" stroke="#fa1408" stroke-width="3" stroke-linecap="round"/>
      <path d="M${x2 + 4 * d} ${y}l${-10 * d} -5.300 ${2.5 * d} 5.300 ${-2.5 * d} 5.300z" fill="#fa1408"/>`;
}

const board = document.getElementById('board');
captures.forEach((cap, n) => {
  const el = document.getElementById('screen').content.firstElementChild.cloneNode(true);
  if (n) el.classList.add('second');
  el.querySelector('.domains').innerHTML = domains.map(([ic, t, c, lvl, cls = '']) =>
    `<li class="${lvl === 1 ? 'child' : ''} ${cls}">${lvl === 0 ? icon('chev') : lvl === 2 ? '<span class="none"></span>' : ''}${icon(ic)}<b>${t}</b><span class="n">${c}</span></li>`).join('');
  el.querySelector('.tbody').innerHTML = Array.from({ length: 24 }, (_, i) =>
    `<div class="tr">${rows[i] ? [i, ...rows[i]].map(v => `<span>${v}</span>`).join('') : ''}</div>`).join('');
  el.querySelectorAll('i[data-i]:empty').forEach(i => { i.innerHTML = `<svg><use href="#${i.dataset.i}"/></svg>`; });
  el.querySelector('.scene').innerHTML = sceneSvg(cap, n);
  el.querySelector('.graph').innerHTML = cap.nodes.map(nodeHtml).join('');
  el.querySelector('.marks').innerHTML = marksSvg(cap);
  board.insertBefore(el, board.querySelector('.note'));
});
```
